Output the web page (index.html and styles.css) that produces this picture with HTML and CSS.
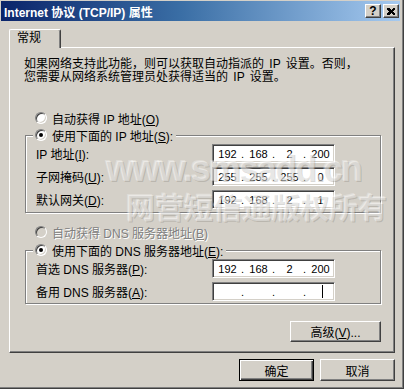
FILE: index.html
```html
<!DOCTYPE html>
<html lang="zh-CN">
<head>
    <meta charset="UTF-8">
    <meta name="viewport" content="width=device-width, initial-scale=1.0">
    <title>Internet 协议 (TCP/IP) 属性</title>
    <link rel="stylesheet" href="styles.css">
</head>
<body>
    <div class="window">
        <div class="titlebar">
            <span class="title">Internet 协议 (TCP/IP) 属性</span>
            <div class="title-buttons">
                <span class="tbtn help">?</span>
                <span class="tbtn">
                    <svg width="8" height="7" viewBox="0 0 8 7" shape-rendering="crispEdges">
                        <path d="M0 0h2l2 2 2-2h2v1l-2 2.5 2 2.5v1h-2l-2-2-2 2h-2v-1l2-2.5-2-2.5z" fill="#000"/>
                    </svg>
                </span>
            </div>
        </div>

        <div class="tabs">
            <div class="tab">常规</div>
        </div>

        <div class="panel">
            <p class="intro">如果网络支持此功能，则可以获取自动指派的 IP 设置。否则，<br>您需要从网络系统管理员处获得适当的 IP 设置。</p>

            <div class="option first"><span class="radio"></span><span>自动获得 IP 地址(<u>O</u>)</span></div>

            <div class="group">
                <div class="legend"><span class="radio checked"></span><span>使用下面的 IP 地址(<u>S</u>):</span></div>
                <div class="row">
                    <span class="label">IP 地址(<u>I</u>):</span>
                    <div class="ipbox">
                        <span class="seg">192</span><span class="dot">.</span><span class="seg">168</span><span class="dot">.</span><span class="seg">2</span><span class="dot">.</span><span class="seg">200</span>
                    </div>
                </div>
                <div class="row">
                    <span class="label">子网掩码(<u>U</u>):</span>
                    <div class="ipbox">
                        <span class="seg">255</span><span class="dot">.</span><span class="seg">255</span><span class="dot">.</span><span class="seg">255</span><span class="dot">.</span><span class="seg">0</span>
                    </div>
                </div>
                <div class="row">
                    <span class="label">默认网关(<u>D</u>):</span>
                    <div class="ipbox">
                        <span class="seg">192</span><span class="dot">.</span><span class="seg">168</span><span class="dot">.</span><span class="seg">2</span><span class="dot">.</span><span class="seg">1</span>
                    </div>
                </div>
            </div>

            <div class="option disabled"><span class="radio off"></span><span>自动获得 DNS 服务器地址(<u>B</u>)</span></div>

            <div class="group dns">
                <div class="legend"><span class="radio checked"></span><span>使用下面的 DNS 服务器地址(<u>E</u>):</span></div>
                <div class="row">
                    <span class="label">首选 DNS 服务器(<u>P</u>):</span>
                    <div class="ipbox">
                        <span class="seg">192</span><span class="dot">.</span><span class="seg">168</span><span class="dot">.</span><span class="seg">2</span><span class="dot">.</span><span class="seg">200</span>
                    </div>
                </div>
                <div class="row">
                    <span class="label">备用 DNS 服务器(<u>A</u>):</span>
                    <div class="ipbox">
                        <span class="seg"></span><span class="dot">.</span><span class="seg"></span><span class="dot">.</span><span class="seg"></span><span class="dot">.</span><span class="seg"><span class="caret"></span></span>
                    </div>
                </div>
            </div>

            <button class="btn advanced">高级(<u>V</u>)...</button>
        </div>

        <div class="actions">
            <button class="btn default">确定</button>
            <button class="btn">取消</button>
        </div>

        <!-- watermark printed over the screenshot -->
        <div class="watermark">
            <span class="wm-url">www.smsadd.cn</span>
            <span class="wm-cn">网营短信通版权所有</span>
        </div>
    </div>
</body>
</html>
```

FILE: styles.css
```css
* {
    box-sizing: border-box;
}
body {
    margin: 0;
    background-color: #d4d0c8;
    font-family: "Liberation Sans", "Noto Sans CJK SC", sans-serif;
    font-size: 12px;
    color: #000;
}
u {
    text-decoration: underline;
    text-underline-offset: 1px;
}
.window {
    position: relative;
    width: 404px;
    height: 389px;
    padding: 1px 3px 0 1px;
    background-color: #d4d0c8;
    border-right: 1px solid #404040;
    border-bottom: 1px solid #404040;
    box-shadow: inset -1px -1px #808080;
    overflow: hidden;
}
.titlebar {
    height: 20px;
    display: flex;
    align-items: center;
    justify-content: space-between;
    padding: 0 1px 0 3px;
    background: linear-gradient(to right, #0a246a, #3a6ea5 45%, #a6caf0);
}
.title {
    color: #fff;
    font-weight: bold;
    font-size: 12px;
    white-space: nowrap;
}
.title-buttons {
    display: flex;
    gap: 2px;
}
.tbtn {
    width: 16px;
    height: 14px;
    display: flex;
    align-items: center;
    justify-content: center;
    background-color: #d4d0c8;
    border: 1px solid;
    border-color: #fff #404040 #404040 #fff;
    box-shadow: inset -1px -1px #808080;
}
.tbtn.help {
    font-weight: bold;
    font-size: 12px;
    line-height: 12px;
}
.tabs {
    height: 26px;
    display: flex;
    align-items: flex-end;
    padding-left: 8px;
}
.tab {
    position: relative;
    z-index: 1;
    width: 52px;
    height: 19px;
    margin-bottom: -1px;
    padding-left: 7px;
    line-height: 17px;
    background-color: #d4d0c8;
    border-left: 1px solid #fff;
    border-top: 1px solid #fff;
    border-right: 1px solid #404040;
    border-radius: 2px 2px 0 0;
    box-shadow: inset -1px 0 #808080;
}
.panel {
    display: flex;
    flex-direction: column;
    margin-left: 8px;
    width: 386px;
    height: 306px;
    padding: 10px 13px 0 15px;
    border-top: 1px solid #fff;
    border-left: 1px solid #fff;
    border-right: 1px solid #404040;
    border-bottom: 1px solid #404040;
    box-shadow: inset -1px -1px #808080;
}
.intro {
    margin: 0 0 0 -1px;
    line-height: 13px;
    white-space: nowrap;
    word-spacing: 2px;
}
.option {
    height: 16px;
    display: flex;
    align-items: center;
    gap: 5px;
    padding-left: 10px;
    white-space: nowrap;
}
.option.first {
    margin-top: 26px;
}
.option.disabled {
    margin-top: 11px;
    color: #808080;
    text-shadow: 1px 1px #fff;
}
.radio {
    position: relative;
    flex: none;
    width: 12px;
    height: 12px;
    border-radius: 50%;
    background-color: #fff;
    border: 1px solid;
    border-color: #808080 #fff #fff #808080;
    box-shadow: inset 1px 1px #404040, inset -1px -1px #d4d0c8;
}
.radio.off {
    background-color: #d4d0c8;
}
.radio.checked::after {
    content: "";
    position: absolute;
    left: 3px;
    top: 3px;
    width: 4px;
    height: 4px;
    border-radius: 50%;
    background-color: #000;
}
.group {
    position: relative;
    margin-top: 9px;
    display: flex;
    flex-direction: column;
    gap: 4px;
    padding: 8px 44px 3px 10px;
    border: 1px solid #808080;
    box-shadow: inset 1px 1px #fff, 1px 1px #fff;
}
.group.dns {
    margin-top: 10px;
    padding-bottom: 2px;
}
.legend {
    position: absolute;
    top: -9px;
    left: 7px;
    height: 16px;
    display: flex;
    align-items: center;
    gap: 5px;
    padding: 0 3px 0 2px;
    background-color: #d4d0c8;
    white-space: nowrap;
}
.row {
    height: 19px;
    display: flex;
    align-items: center;
}
.label {
    width: 176px;
    white-space: nowrap;
}
.ipbox {
    width: 123px;
    height: 19px;
    display: flex;
    align-items: center;
    padding-left: 1px;
    background-color: #fff;
    border: 1px solid;
    border-color: #808080 #fff #fff #808080;
    box-shadow: inset 1px 1px #404040, inset -1px -1px #d4d0c8;
    font-size: 11px;
    overflow: hidden;
}
.seg {
    width: 27px;
    flex: none;
    display: flex;
    justify-content: center;
    align-items: center;
    height: 13px;
}
.dot {
    width: 4px;
    flex: none;
}
.caret {
    width: 1px;
    height: 13px;
    margin-left: 3px;
    background-color: #000;
}
.btn {
    height: 21px;
    padding: 0;
    font-family: "Liberation Sans", "Noto Sans CJK SC", sans-serif;
    font-size: 12px;
    color: #000;
    background-color: #d4d0c8;
    border: 1px solid;
    border-color: #fff #404040 #404040 #fff;
    box-shadow: inset -1px -1px #808080;
    border-radius: 0;
}
.btn.advanced {
    align-self: flex-end;
    width: 91px;
    margin-top: 17px;
}
.actions {
    display: flex;
    justify-content: flex-end;
    gap: 6px;
    margin-top: 6px;
    margin-right: 5px;
}
.actions .btn {
    width: 75px;
    height: 22px;
}
.btn.default {
    border-color: #000;
    box-shadow: inset 1px 1px #fff, inset -1px -1px #404040, inset -2px -2px #808080;
}
.watermark {
    position: absolute;
    left: 106px;
    top: 150px;
    display: flex;
    flex-direction: column;
    pointer-events: none;
    color: rgba(255, 255, 255, 0.4);
    text-shadow: 1px 1px 0 rgba(110, 105, 98, 0.25), -1px -1px 0 rgba(255, 255, 255, 0.3);
    font-weight: bold;
    white-space: nowrap;
}
.wm-url {
    font-size: 36px;
    line-height: 38px;
    letter-spacing: -2px;
}
.wm-cn {
    margin-left: 20px;
    font-family: "Noto Sans CJK SC", sans-serif;
    font-size: 29px;
    line-height: 36px;
}
```
